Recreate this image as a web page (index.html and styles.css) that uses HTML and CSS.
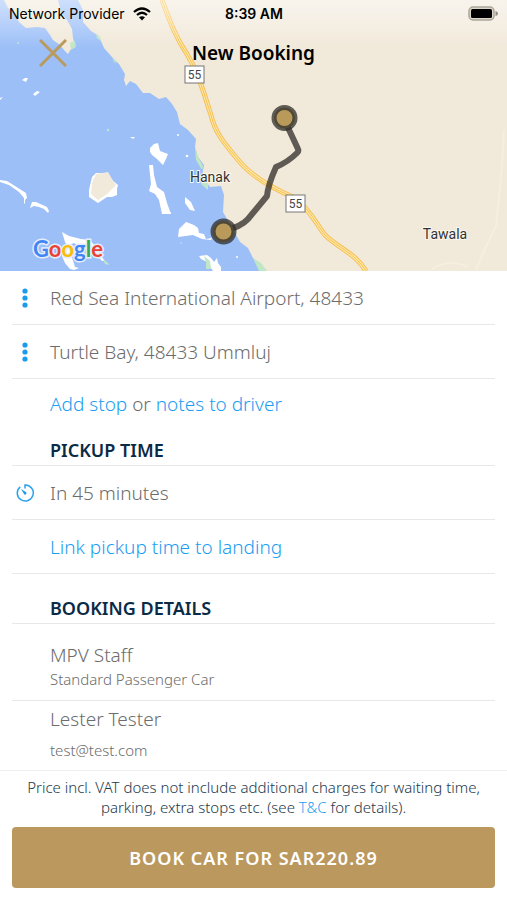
FILE: index.html
```html
<!DOCTYPE html>
<html lang="en">
<head>
<meta charset="utf-8">
<meta name="viewport" content="width=device-width, initial-scale=1">
<title>New Booking</title>
<link rel="stylesheet" href="styles.css">
</head>
<body>
<div class="app">
  <header class="hero">
    <svg class="map" viewBox="0 0 507 271" preserveAspectRatio="xMidYMid slice" role="img" aria-label="Route map">
      <defs>
        <linearGradient id="haze" x1="0" y1="0" x2="0" y2="1">
          <stop offset="0" stop-color="#fff" stop-opacity=".5"/>
          <stop offset=".45" stop-color="#fff" stop-opacity=".3"/>
          <stop offset="1" stop-color="#fff" stop-opacity="0"/>
        </linearGradient>
      </defs>
      <rect width="507" height="271" fill="#9cbff8"/>
      <g fill="#f1e9da">
        <path d="M4 0 8 8 15 14 19 22 26 28 37 27 45 28 50 35 53 40 60 45 64 50 68 54 71 49 75 46 73 38 72 29 67 20 61 12 58 0Z"/>
        <path d="M78 0 83 10 83 22 91 31 99 36 104 48 112 57 119 64 125 74 124 80 126 86 130 81 136 84 143 93 150 93 159 99 166 97 172 104 177 112 180 124 188 130 196 139 195 147 198 157 204 165 202 176 210 187 221 186 224 195 223 212 231 226 240 242 248 248 253 258 262 266 266 271H507V0Z"/>
      </g>
      <g fill="#bfe6c6">
        <path d="M70 43 75 41 76 47 71 50ZM96 35l4 1 1 5-4-3zM112 57l5 6-3-1zM195 147l3 10 5 9-1 4-6-10zM202 178l6 5 0 7-7-6zM253 258l8 5 6 8h-8z"/>
        <circle cx="18" cy="43" r="1"/><circle cx="108" cy="130" r="1.200"/>
      </g>
      <g fill="#fff">
        <path d="M22 80l3-2 3 0-2 4zM33 94l4-3 3 1-5 4zM0 98l3-1-3 3zM130 137l5 0-2 2z"/>
        <path d="M0 180l7 1 8 5 11 7 1 5-2 2v4l-1-1v-5l-5-6-10-7-9-3zM32 202l4 0 11 5 2 4-1 2-4-4-5-2-5-1-4 2z"/>
        <path d="M92 177 96 173h12l4 7 6 5-1 4 0 6-5 2-5 0-9 6-9-6 0-7z"/>
        <path d="M150 148l4-4 4-1 2 8 8 3-2 5-3 6-6-6-5-4-2-3zM149 165l4 0 1 10 3 12 7 5 3 11 4 11h-9l-3-14-4-6-6-3 2-7z"/>
        <path d="M62 232l7 4 12 3 9 1 5 6 4 7 6 8-3 0-9-10-12-3-7-5-5 2 2 9 4 13 4 1-5 2-4-1-5-6-3-7 3-6 4-1-4-7zM185 197l6 5 4 9-5-1-5-7zM178 237l1-8 7-7 8 3 4 3 1 5 5 1 2 5 6-1-1 2-9-1-9-4zM199 256l8-1 4 3 3 4 3-4 1 5 3 4 0 4h-8l-6-9-6-3z"/>
        <circle cx="178" cy="135" r="1"/><circle cx="187" cy="156" r="1.300"/><circle cx="181" cy="243" r=".6"/><circle cx="237" cy="257" r="1"/><circle cx="170" cy="213" r="1"/>
      </g>
      <path d="M103 259l5 4 1 2-4-1zM204 256l6 5 1 8h-5l0-7z" fill="#bfe6c6"/>
      <path d="M96 174l12-2 4 7 4 6-9 9-9 6-7-6 1-11z" fill="#f1e9da"/>
      <path d="M504 130 502 167 496 226 484 251 476 270M432 269q18-11 36-2" fill="none" stroke="#f6eedf" stroke-width="2"/>
      <path d="M162 0C170 22 176 38 187 54C199 74 204 94 211 115C215 133 225 144 239 161C253 178 274 189 295 198C311 211 315 222 325 235C338 248 355 253 366 271" fill="none" stroke="#f5bf55" stroke-width="5"/>
      <path d="M162 0C170 22 176 38 187 54C199 74 204 94 211 115C215 133 225 144 239 161C253 178 274 189 295 198C311 211 315 222 325 235C338 248 355 253 366 271" fill="none" stroke="#ffe9a5" stroke-width="3"/>
      <path d="M162 0C170 22 176 38 187 54C199 74 204 94 211 115C215 133 225 144 239 161C253 178 274 189 295 198C311 211 315 222 325 235C338 248 355 253 366 271" fill="none" stroke="#f5bf55" stroke-width="1"/>
      <rect width="507" height="48" fill="url(#haze)"/>
      <g class="shield">
        <rect x="185" y="66" width="19" height="17"/><text x="194.500" y="79">55</text>
        <rect x="286" y="195" width="19" height="17"/><text x="295.500" y="208">55</text>
      </g>
      <path d="M284 119 298 149Q299 151 297 153Q288 162 276 167Q268 185 267 196L248 219Q241 227 223 231" fill="none" stroke="#2e2a26" stroke-opacity=".75" stroke-width="6" stroke-linejoin="round" stroke-linecap="round"/>
      <g fill="#b99a5b" stroke="#2e2c2a" stroke-opacity=".75" stroke-width="5">
        <circle cx="284.500" cy="118" r="10.500"/><circle cx="223.500" cy="231.500" r="10.500"/>
      </g>
      <g class="place"><text x="210" y="182">Hanak</text><text x="445" y="239">Tawala</text></g>
      <text class="logo" x="33" y="257"><tspan fill="#4285f4">G</tspan><tspan fill="#ea4335">o</tspan><tspan fill="#fbbc05">o</tspan><tspan fill="#4285f4">g</tspan><tspan fill="#34a853">l</tspan><tspan fill="#ea4335">e</tspan></text>
    </svg>
    <div class="overlay">
      <div class="status">
        <span class="carrier">Network Provider
          <svg class="wifi" viewBox="0 0 18 14" aria-hidden="true"><path d="M1 5Q9-2 17 5M4 8Q9 3.500 14 8" fill="none" stroke="#000" stroke-width="2.300"/><path d="M6 10.300Q9 8 12 10.300L9 13.500Z"/></svg>
        </span>
        <span class="clock">8:39 AM</span>
        <svg class="battery" viewBox="0 0 31 15" aria-hidden="true"><rect x="1" y="1" width="25" height="13" rx="4" fill="#dcd7c9" stroke="#aaa699" stroke-width="1.500"/><rect x="3" y="3" width="21" height="9" rx="1.500"/><path d="M27.500 5Q30 5.500 30 7.500T27.500 10Z" fill="#8f8c82"/></svg>
      </div>
      <div class="titlebar">
        <button class="close" aria-label="Close"><svg viewBox="0 0 28 28" aria-hidden="true"><path d="M1 1 27 27M27 1 1 27" stroke="#b99a5f" stroke-width="3"/></svg></button>
        <h1>New Booking</h1>
      </div>
    </div>
  </header>
  <main class="content">
    <div class="row"><svg class="dots" viewBox="0 0 6 20" aria-hidden="true"><circle cx="3" cy="3" r="2.600"/><circle cx="3" cy="10" r="2.600"/><circle cx="3" cy="17" r="2.600"/></svg><span>Red Sea International Airport, 48433</span></div>
    <div class="row"><svg class="dots" viewBox="0 0 6 20" aria-hidden="true"><circle cx="3" cy="3" r="2.600"/><circle cx="3" cy="10" r="2.600"/><circle cx="3" cy="17" r="2.600"/></svg><span>Turtle Bay, 48433 Ummluj</span></div>
    <p class="row extras"><span><a href="#stop">Add stop</a> or <a href="#notes">notes to driver</a></span></p>
    <h2 class="pickup">PICKUP TIME</h2>
    <div class="row"><svg class="timer" viewBox="0 0 18 18" aria-hidden="true"><path d="M4.200 2.800A8 8 0 1 0 9 1V4.500" fill="none" stroke="#2ba3ee" stroke-width="1.500"/><path d="M5 5 9.800 7.900A1.400 1.400 0 1 1 7.900 9.800Z" fill="#1b9bee"/></svg><span>In 45 minutes</span></div>
    <div class="row"><span><a href="#landing">Link pickup time to landing</a></span></div>
    <h2 class="details">BOOKING DETAILS</h2>
    <section class="item car"><p>MPV Staff</p><small>Standard Passenger Car</small></section>
    <section class="item passenger"><p>Lester Tester</p><small>test@test.com</small></section>
  </main>
  <footer class="footer">
    <p>Price incl. VAT does not include additional charges for waiting time, parking, extra stops etc. (see <a href="#terms">T&amp;C</a> for details).</p>
    <button class="book">BOOK CAR FOR SAR220.89</button>
  </footer>
</div>
</body>
</html>
```
FILE: styles.css
```css
* { box-sizing: border-box; }
body { margin: 0; background: #fff; color: #6c6c6c; font-family: "Noto Sans", sans-serif; }
.app { display: flex; flex-direction: column; min-height: 100vh; }
h1, h2, p { margin: 0; }
a { color: #1b9df0; text-decoration: none; }
button { border: 0; padding: 0; font: inherit; }

.hero { display: grid; }
.map, .overlay { grid-area: 1 / 1; }
.map { display: block; width: 100%; height: 271px; }
.shield rect { fill: #fff; stroke: #777; stroke-width: 1px; }
.shield text { font: 12px Roboto, sans-serif; fill: #444; text-anchor: middle; }
.place text { font: 14px Roboto, sans-serif; fill: #333; stroke: #fbf7ef; stroke-width: 2px; paint-order: stroke; text-anchor: middle; }
.logo { font: 700 22px Lato, sans-serif; stroke: #e5edfb; stroke-width: 3px; paint-order: stroke; }

.overlay { position: relative; color: #000; }
.status { display: grid; grid-template-columns: 1fr auto 1fr; align-items: center; height: 27px; padding: 0 8px 0 9px; font: 14px Inter, sans-serif; }
.carrier { display: flex; align-items: center; gap: 8px; }
.wifi { width: 18px; height: 14px; }
.clock { font-weight: 600; }
.battery { width: 31px; height: 15px; justify-self: end; }
.titlebar { display: grid; grid-template-columns: 40px 1fr 40px; align-items: center; height: 51px; padding: 0 33px; }
.close { width: 40px; height: 40px; background: none; }
.close svg { display: block; width: 28px; height: 28px; margin: auto; }
h1 { font-size: 19px; font-weight: 600; line-height: 28px; text-align: center; }

.content { flex: 1; padding: 0 12px; }
.row { display: grid; grid-template-columns: 26px 1fr; column-gap: 12px; align-items: center; height: 54px; border-bottom: 1px solid #e8e8e8; font-size: 19px; font-weight: 300; }
.row > span { grid-column: 2; }
.row svg { justify-self: center; }
.dots { width: 6px; height: 20px; fill: #1b9bee; }
.timer { width: 18px; height: 18px; }
.extras { height: 49px; border: 0; }
h2 { padding-left: 38px; padding-bottom: 3px; border-bottom: 1px solid #e8e8e8; color: #0b2a45; font-size: 18px; font-weight: 600; line-height: 24px; }
.pickup { padding-top: 10px; }
.details { padding-top: 22px; }
.item { padding-left: 38px; font-weight: 300; }
.item p { font-size: 19px; line-height: 26px; }
.item small { display: block; font-size: 15px; line-height: 22px; }
.car { padding-top: 18px; padding-bottom: 10px; border-bottom: 1px solid #e8e8e8; }
.passenger { display: grid; row-gap: 7px; padding-top: 5px; padding-bottom: 6px; }

.footer { padding: 6px 12px 12px; border-top: 1px solid #eee; text-align: center; }
.footer p { max-width: 480px; margin: 0 auto 10px; color: #24394c; font-size: 15px; font-weight: 300; line-height: 20px; }
.book { width: 100%; height: 61px; border-radius: 4px; background: #bb985e; color: #fff; font-size: 18px; font-weight: 600; letter-spacing: 1px; }
```
